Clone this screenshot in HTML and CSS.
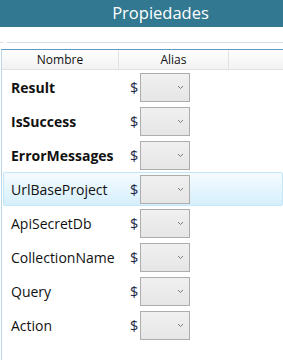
FILE: index.html
```html
<!DOCTYPE html>
<html>
<head>
<meta charset="utf-8">
<link rel="stylesheet" href="styles.css">
</head>
<body>
<div class="titlebar">Propiedades</div>
<div class="toolbar"><span class="stub"></span><span class="rule"></span></div>
<div class="grid">
  <div class="head">
    <div class="hcell c-name">Nombre</div>
    <div class="hcell c-alias">Alias</div>
    <div class="hcell c-rest"></div>
  </div>
  <div class="row"><span class="label bold">Result</span><span class="dollar">$</span><span class="combo"><svg width="7" height="5" viewBox="0 0 7 5"><path d="M1 1 L3.5 3.5 L6 1" fill="none" stroke="#7a7a7a" stroke-width="1"/></svg></span></div>
  <div class="row"><span class="label bold">IsSuccess</span><span class="dollar">$</span><span class="combo"><svg width="7" height="5" viewBox="0 0 7 5"><path d="M1 1 L3.5 3.5 L6 1" fill="none" stroke="#7a7a7a" stroke-width="1"/></svg></span></div>
  <div class="row"><span class="label bold">ErrorMessages</span><span class="dollar">$</span><span class="combo"><svg width="7" height="5" viewBox="0 0 7 5"><path d="M1 1 L3.5 3.5 L6 1" fill="none" stroke="#7a7a7a" stroke-width="1"/></svg></span></div>
  <div class="row hover"><span class="label">UrlBaseProject</span><span class="dollar">$</span><span class="combo"><svg width="7" height="5" viewBox="0 0 7 5"><path d="M1 1 L3.5 3.5 L6 1" fill="none" stroke="#7a7a7a" stroke-width="1"/></svg></span></div>
  <div class="row"><span class="label">ApiSecretDb</span><span class="dollar">$</span><span class="combo"><svg width="7" height="5" viewBox="0 0 7 5"><path d="M1 1 L3.5 3.5 L6 1" fill="none" stroke="#7a7a7a" stroke-width="1"/></svg></span></div>
  <div class="row"><span class="label">CollectionName</span><span class="dollar">$</span><span class="combo"><svg width="7" height="5" viewBox="0 0 7 5"><path d="M1 1 L3.5 3.5 L6 1" fill="none" stroke="#7a7a7a" stroke-width="1"/></svg></span></div>
  <div class="row"><span class="label">Query</span><span class="dollar">$</span><span class="combo"><svg width="7" height="5" viewBox="0 0 7 5"><path d="M1 1 L3.5 3.5 L6 1" fill="none" stroke="#7a7a7a" stroke-width="1"/></svg></span></div>
  <div class="row"><span class="label">Action</span><span class="dollar">$</span><span class="combo"><svg width="7" height="5" viewBox="0 0 7 5"><path d="M1 1 L3.5 3.5 L6 1" fill="none" stroke="#7a7a7a" stroke-width="1"/></svg></span></div>
</div>
</body>
</html>
```
FILE: styles.css
```css
html, body {
  margin: 0;
  padding: 0;
  background: #ffffff;
  font-family: "Open Sans", "Noto Sans", sans-serif;
  color: #111111;
  overflow: hidden;
  width: 283px;
  height: 360px;
}
.titlebar {
  height: 27px;
  background: #327891;
  color: #ffffff;
  font-size: 16.5px;
  line-height: 25px;
  text-align: center;
  padding-left: 38px;
}
.toolbar {
  height: 22px;
  display: flex;
  align-items: flex-start;
  padding-top: 15px;
  box-sizing: border-box;
}
.toolbar .stub {
  width: 3px;
  height: 1px;
  background: #d3dde5;
}
.toolbar .rule {
  flex: 1;
  height: 1px;
  margin-left: 4px;
  background: #d3dde5;
}
.grid {
  border-top: 1px solid #5d9bc4;
  border-left: 1px solid #bcd9ec;
  margin-left: 1px;
  height: 310px;
}
.head {
  display: flex;
  height: 20px;
  background: linear-gradient(#ffffff, #f2f2f2);
  border-bottom: 1px solid #e2e2e2;
  box-sizing: border-box;
}
.hcell {
  font-size: 12px;
  line-height: 19px;
  text-align: center;
  color: #111;
  border-right: 1px solid #e2e2e2;
  box-sizing: border-box;
}
.c-name { width: 117px; }
.c-alias { width: 110px; }
.c-rest { flex: 1; border-right: none; }
.row {
  display: flex;
  align-items: center;
  height: 34px;
  box-sizing: border-box;
}
.row.hover {
  background: linear-gradient(#f4fbff, #d6effc);
  border: 1px solid #c3e6f8;
  border-radius: 2px;
  margin-left: 1px;
}
.label {
  width: 128px;
  padding-left: 9px;
  box-sizing: border-box;
  font-size: 14px;
  white-space: nowrap;
}
.row.hover .label { padding-left: 7px; width: 126px; }
.label.bold { font-weight: 700; }
.dollar {
  width: 10px;
  font-size: 14.5px;
  color: #1c2a48;
}
.combo {
  width: 50px;
  height: 29px;
  box-sizing: border-box;
  border: 1px solid #adadad;
  background: linear-gradient(#f0f0f0, #e6e6e6);
  display: flex;
  align-items: center;
  justify-content: flex-end;
  padding-right: 5px;
}
```
